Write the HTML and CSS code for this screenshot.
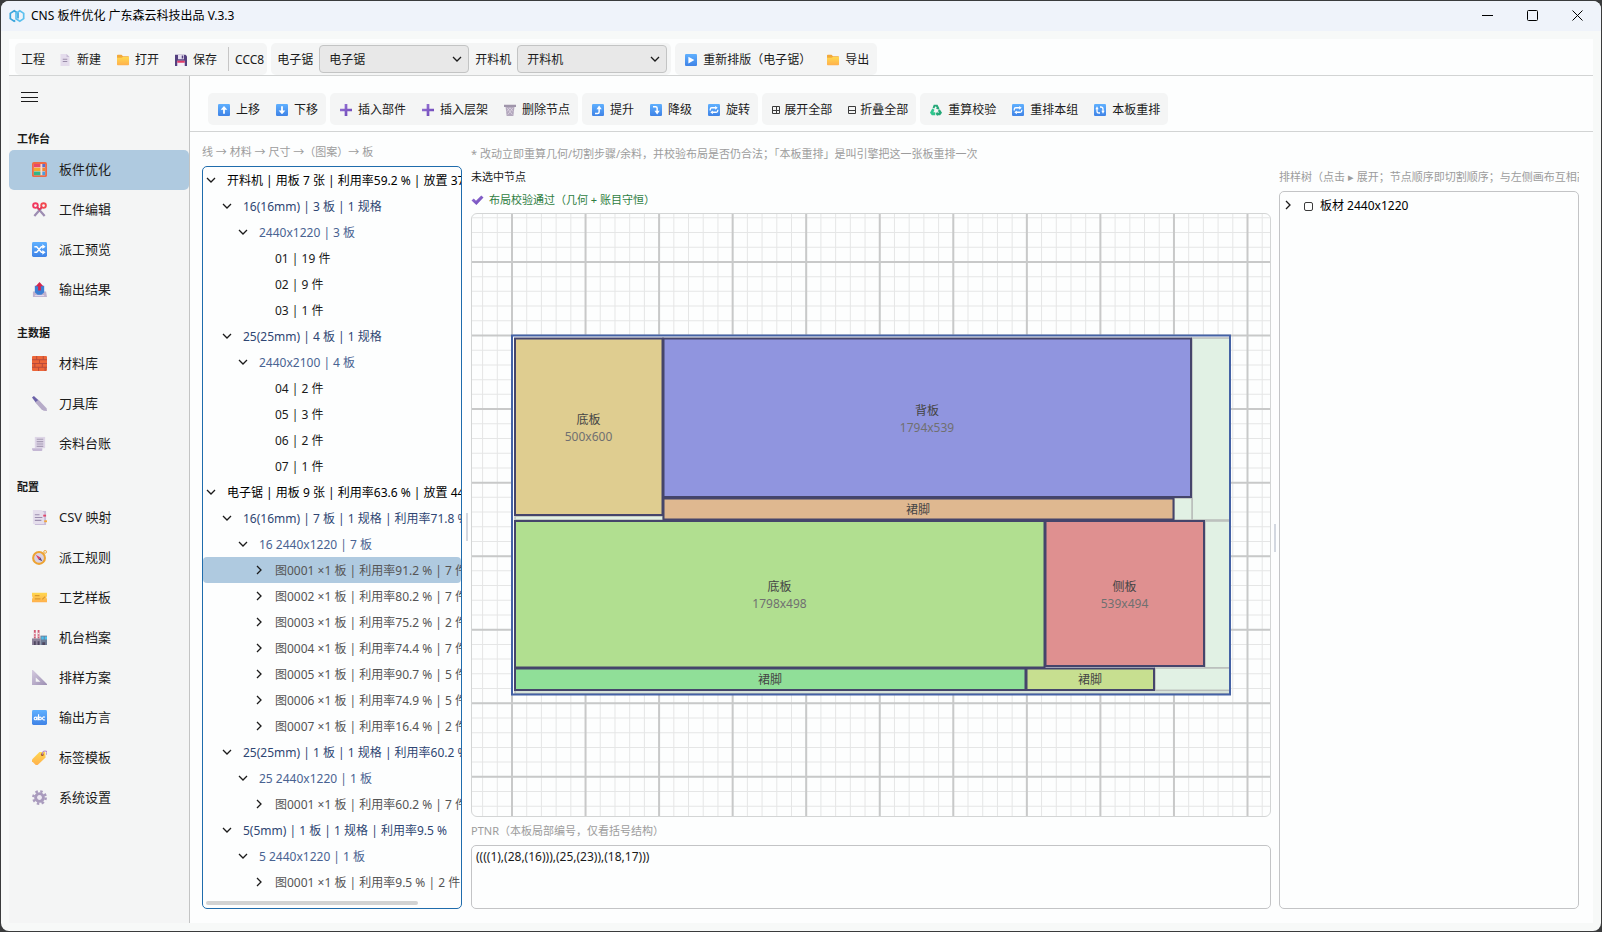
FILE: index.html
```html
<!DOCTYPE html>
<html lang="zh-CN">
<head>
<meta charset="utf-8">
<title>CNS 板件优化</title>
<link rel="stylesheet" href="styles.css">
</head>
<body>
<svg class="sprite" aria-hidden="true">
  <defs>
    <linearGradient id="blue" x1="0" y1="0" x2="0" y2="1"><stop offset="0" stop-color="#5fb0ff"/><stop offset="1" stop-color="#3f83e6"/></linearGradient>
    <linearGradient id="gold" x1="0" y1="0" x2="0" y2="1"><stop offset="0" stop-color="#ffd84f"/><stop offset="1" stop-color="#ffb04d"/></linearGradient>
    <linearGradient id="violet" x1="0" y1="0" x2="1" y2="1"><stop offset="0" stop-color="#9a78d8"/><stop offset="1" stop-color="#6a43b5"/></linearGradient>
    <linearGradient id="steel" x1="0" y1="0" x2="1" y2="1"><stop offset="0" stop-color="#d5cbe0"/><stop offset="1" stop-color="#9c8fb3"/></linearGradient>
  </defs>
  <symbol id="i-logo" viewBox="0 0 16 14"><g fill="none" stroke-width="1.7"><path stroke="#3aa5dc" d="M6.200 11.600L5.200 12.200L1.300 9.600V4.400L5.200 1.800L9 4.300V9.500"/><path stroke="#5cc0ee" d="M7 4.500L10.800 1.800L14.700 4.400V9.600L10.800 12.200L7 9.700z"/></g></symbol>
  <symbol id="i-new" viewBox="0 0 16 16"><path fill="#e4dcec" d="M2 0h8l4 4v12H2z"/><path fill="#c7bbd4" d="M10 0l4 4h-4z"/><path stroke="#9a8ca9" stroke-width="1.600" d="M5 7h6M5 10h6"/></symbol>
  <symbol id="i-folder" viewBox="0 0 16 16"><path fill="#f2a93a" d="M0 2q0-1 1-1h5l2 2h7q1 0 1 1v4H0z"/><path fill="url(#gold)" d="M0 5h6l2-1h8v10q0 1-1 1H1q-1 0-1-1z"/></symbol>
  <symbol id="i-save" viewBox="0 0 16 16"><path fill="#54407f" d="M0 1h14l2 2v13H0z"/><path fill="#e6deef" d="M4 1h8v6H4z"/><path fill="#54407f" d="M9 2h2v4H9z"/><path fill="#f4eef8" d="M3 9h10v7H3z"/><path fill="#df3b68" d="M3 9h10v2.500H3z"/></symbol>
  <symbol id="i-play" viewBox="0 0 16 16"><rect width="16" height="16" rx="1.500" fill="url(#blue)"/><path fill="#fff" d="M4.500 3.500l8 4.500-8 4.500z"/></symbol>
  <symbol id="i-up" viewBox="0 0 16 16"><rect width="16" height="16" rx="1.500" fill="url(#blue)"/><path fill="#fff" d="M8 2.500L12.500 7.500H9.200V13H6.800V7.500H3.500z"/></symbol>
  <symbol id="i-down" viewBox="0 0 16 16"><rect width="16" height="16" rx="1.500" fill="url(#blue)"/><path fill="#fff" d="M8 13.500L3.500 8.500H6.800V3H9.200V8.500H12.500z"/></symbol>
  <symbol id="i-plus" viewBox="0 0 16 16"><path fill="url(#violet)" d="M6.200 0h3.600v6.200H16v3.600H9.800V16H6.200V9.800H0V6.200h6.200z"/></symbol>
  <symbol id="i-trash" viewBox="0 0 16 16"><path fill="#b3a8bd" d="M2 3h12l-1.500 13h-9z"/><path fill="#9f95aa" d="M0 1h16v3H0z"/><path stroke="#e0d8e6" stroke-width="1" fill="none" d="M4 5l7 9M8 5l4 5M12 5l-7 9M8 5l-4 5"/></symbol>
  <symbol id="i-raise" viewBox="0 0 16 16"><rect width="16" height="16" rx="1.500" fill="url(#blue)"/><path fill="none" stroke="#fff" stroke-width="2" d="M4 12.500h3.500q2 0 2-2V6"/><path fill="#fff" d="M9.500 2L13 7H6z"/></symbol>
  <symbol id="i-lower" viewBox="0 0 16 16"><rect width="16" height="16" rx="1.500" fill="url(#blue)"/><path fill="none" stroke="#fff" stroke-width="2" d="M4 3.500h3.500q2 0 2 2V10"/><path fill="#fff" d="M9.500 14L13 9H6z"/></symbol>
  <symbol id="i-rotate" viewBox="0 0 16 16"><rect width="16" height="16" rx="1.500" fill="url(#blue)"/><path fill="none" stroke="#fff" stroke-width="1.700" d="M3 8.500V7q0-2 2-2h5M13 7.500V9q0 2-2 2H6"/><path fill="#fff" d="M9.500 2.500l3.500 2.500-3.500 2.500zM6.500 8.500L3 11l3.500 2.500z"/></symbol>
  <symbol id="i-cycle" viewBox="0 0 16 16"><rect width="16" height="16" rx="1.500" fill="url(#blue)"/><path fill="none" stroke="#fff" stroke-width="1.700" d="M4 6v3.500q0 2.500 3 2.500h1M12 10V6.500Q12 4 9 4H8"/><path fill="#fff" d="M1.800 7H6.200L4 3zM9.800 9h4.400L12 13z"/></symbol>
  <symbol id="i-expand" viewBox="0 0 8 8"><path fill="none" stroke="#3b3b3b" d="M.5.5h7v7h-7zM1 4.500h6M4.500 1v6"/></symbol>
  <symbol id="i-collapse" viewBox="0 0 8 8"><path fill="none" stroke="#3b3b3b" d="M.5.5h7v7h-7zM1 4.500h6"/></symbol>
  <symbol id="i-recycle" viewBox="0 0 16 16"><g fill="#25a878"><path d="M5 1h5l2.500 4.500-1 2L8 6l1-1.500L7.500 3 5.500 6 3.500 5z"/><path fill="#2fc58d" d="M3 6l3 1.500L4.500 11H7v4H2.500L0 11.500z"/><path d="M13 7l3 4.500L13.500 15H10v1.500L7.500 13 10 10v1.500h2L10.500 9z"/></g></symbol>
  <symbol id="i-check" viewBox="0 0 16 16"><path fill="url(#violet)" d="M0 8.500L3 6l3 3L13 2l3 2.500L6.500 14.500z"/></symbol>
  <symbol id="i-abacus" viewBox="0 0 16 16"><rect width="16" height="16" rx="2" fill="#ef6a45"/><path fill="#f7d9cf" d="M2 2h12v12H2z"/><path fill="#e8486b" d="M2 2h7v3.500H2z"/><path fill="#5a6fd0" d="M11 2h3v3.500h-3z"/><path fill="#f3aa2c" d="M2 6h7v3.500H2z"/><path fill="#e98a35" d="M11 6h3v3.500h-3z"/><path fill="#35b485" d="M2 10h7v4H2z"/><path fill="#4a9ee0" d="M11 10h3v4h-3z"/></symbol>
  <symbol id="i-scissors" viewBox="0 0 16 16"><path stroke="#9d8db2" stroke-width="2.400" d="M6 6.500l7.500 8.500M10 6.500L2.500 15"/><circle cx="3.700" cy="3.800" r="2.500" fill="none" stroke="#f2385f" stroke-width="2"/><circle cx="12.300" cy="3.800" r="2.500" fill="none" stroke="#f2484f" stroke-width="2"/><path stroke="#e5365c" stroke-width="1.800" fill="none" d="M5.500 5.500L8 8l2.500-2.500"/></symbol>
  <symbol id="i-shuffle" viewBox="0 0 16 16"><rect width="16" height="16" rx="1.500" fill="url(#blue)"/><path fill="none" stroke="#fff" stroke-width="1.500" d="M2.500 5H5l5 6h2M2.500 11H5l5-6h2"/><path fill="#fff" d="M11 2.500L14.500 5 11 7.500zM11 8.500l3.500 2.500-3.500 2.500z"/></symbol>
  <symbol id="i-outbox" viewBox="0 0 16 16"><path fill="#bfb2cf" d="M1 10h14l1 6H1z"/><path fill="#3c7fd4" d="M3 4h10v7l-3 2.500H6L3 11z"/><path fill="#d4264e" d="M8 0l4 4.500H9.500V9h-3V4.500H4z"/><path stroke="#e7deef" d="M3 14.500h10"/></symbol>
  <symbol id="i-brick" viewBox="0 0 16 16"><rect width="16" height="16" rx="1" fill="#ec6639"/><path stroke="#b54a3c" fill="none" d="M0 4h16M0 8h16M0 12h16M5 0v4M12 0v4M8 4v4M3 8v4M11 8v4M7 12v4M14 12v4"/></symbol>
  <symbol id="i-knife" viewBox="0 0 16 16"><path fill="#6b62a8" d="M0 1.500L2 0l5 4.500L4 7z"/><path fill="#b6abc8" d="M3.500 7L7 4l8.500 9 .5 3q-4 0-6-2z"/></symbol>
  <symbol id="i-scroll" viewBox="0 0 16 16"><path fill="#ddd5e6" d="M3 1h11v12H3z"/><path fill="#c4b7d4" d="M0 13h11v2q0 1-1 1H2q-2 0-2-3z"/><path stroke="#a79cb5" stroke-width="1.200" d="M5 3.500h7M5 6h7M5 8.500h7M5 11h7"/></symbol>
  <symbol id="i-doc" viewBox="0 0 16 16"><path fill="#c9bcd9" d="M3 1h12v15H3z"/><path fill="#e5deec" d="M1 0h9l3 3v12H1z"/><path stroke="#9c8eae" stroke-width="1.200" d="M3 5h5M3 8h8M3 11h7"/><path fill="#e0476b" d="M12 5h3v2h-3z"/><path fill="#f2a73c" d="M13 11h3v2h-3z"/></symbol>
  <symbol id="i-compass" viewBox="0 0 16 16"><circle cx="14" cy="2" r="1.500" fill="none" stroke="#eda332"/><circle cx="7.500" cy="8.500" r="6.300" fill="#d9d1e2" stroke="#eda332" stroke-width="2.200"/><path fill="#dd3f60" d="M4 5l5 3-2 2z"/><path fill="#54457c" d="M11 12L7 10l2-2z"/></symbol>
  <symbol id="i-ticket" viewBox="0 0 16 16"><path fill="url(#gold)" d="M0 3h16v3.500q-1.500 1.500 0 3V13H0V9.500q1.500-1.500 0-3z"/><path stroke="#d99a2e" stroke-width="1.200" d="M3 6h5M3 9.500h6M11 10l3-3"/></symbol>
  <symbol id="i-factory" viewBox="0 0 16 16"><path fill="#cf5a73" d="M2 0h2v9H2zM6 0h2v9H6z"/><path fill="#f5e3e8" d="M2 3h2v1.500H2zM6 3h2v1.500H6zM2 6h2v1H2zM6 6h2v1H6z"/><path fill="#8c8299" d="M0 9h9v7H0z"/><path fill="#6d7c96" d="M9 6h7v10H9z"/><path fill="#4cc0ee" d="M10 7h2.500v3H10zM13.500 7H16v3h-2.500z"/><path fill="#4f4760" d="M2 12h2v4H2zM6 12h2v4H6zM11 13h3v3h-3z"/></symbol>
  <symbol id="i-ruler" viewBox="0 0 16 16"><path fill="url(#steel)" fill-rule="evenodd" d="M0 0h1l15 15v1H0zM4 8v4.500h5z"/></symbol>
  <symbol id="i-abc" viewBox="0 0 16 16"><rect width="16" height="16" rx="1.500" fill="url(#blue)"/><g fill="none" stroke="#fff" stroke-width="1.200"><circle cx="3.700" cy="9" r="1.400"/><path d="M5.500 7v4M7 4.500V11M13.800 7.800a1.600 1.600 0 1 0 0 2.400"/><circle cx="8.600" cy="9" r="1.400"/></g></symbol>
  <symbol id="i-tag" viewBox="0 0 16 16"><path fill="url(#gold)" d="M8 2l6 0 .5 6L6 16q-1 .5-2 0L0 12q-.500-1 0-2z"/><circle cx="11" cy="5" r="1.500" fill="#a2582c"/><path fill="none" stroke="#b58ac4" stroke-width="1.200" d="M11 5q0-4 3-4t1.500 4"/></symbol>
  <symbol id="i-gear" viewBox="0 0 16 16"><circle cx="8" cy="8" r="6.600" fill="none" stroke="#a99bbd" stroke-width="2.600" stroke-dasharray="2.600 2.584"/><circle cx="8" cy="8" r="4" fill="none" stroke="#a99bbd" stroke-width="3.400"/><circle cx="8" cy="8" r="2.400" fill="#eee9f3"/></symbol>
  <symbol id="i-chev-d" viewBox="0 0 10 10"><path fill="none" stroke="#1b1b1b" stroke-width="1.300" d="M1 3l4 4 4-4"/></symbol>
  <symbol id="i-chev-r" viewBox="0 0 10 10"><path fill="none" stroke="#1b1b1b" stroke-width="1.300" d="M3 1l4 4-4 4"/></symbol>
</svg>

<div class="window">
  <header class="titlebar">
    <svg class="logo"><use href="#i-logo"/></svg>
    <h1 class="app-title">CNS 板件优化 广东森云科技出品 V.3.3</h1>
    <button class="win-btn" aria-label="最小化"><svg viewBox="0 0 11 11"><path d="M0 5.500h11"/></svg></button>
    <button class="win-btn" aria-label="最大化"><svg viewBox="0 0 11 11"><rect x=".5" y=".5" width="10" height="10" rx="1"/></svg></button>
    <button class="win-btn" aria-label="关闭"><svg viewBox="0 0 11 11"><path d="M.5.5l10 10M10.500.5l-10 10"/></svg></button>
  </header>

  <div class="shell">
    <div class="toolbar toolbar-top">
      <div class="group">
        <span class="group-label">工程</span>
        <button class="tool"><svg class="icon"><use href="#i-new"/></svg>新建</button>
        <button class="tool"><svg class="icon"><use href="#i-folder"/></svg>打开</button>
        <button class="tool"><svg class="icon"><use href="#i-save"/></svg>保存</button>
        <span class="separator"></span>
        <span class="project">CCC8</span>
      </div>
      <div class="group group-fields">
        <label for="saw">电子锯</label>
        <span class="select-box"><select id="saw"><option>电子锯</option></select><svg class="chev"><use href="#i-chev-d"/></svg></span>
        <label for="cutter">开料机</label>
        <span class="select-box"><select id="cutter"><option>开料机</option></select><svg class="chev"><use href="#i-chev-d"/></svg></span>
      </div>
      <div class="group">
        <button class="tool"><svg class="icon"><use href="#i-play"/></svg>重新排版（电子锯）</button>
        <button class="tool"><svg class="icon"><use href="#i-folder"/></svg>导出</button>
      </div>
    </div>

    <div class="body">
      <nav class="sidebar">
        <button class="menu-btn" aria-label="菜单"><svg viewBox="0 0 17 11"><path d="M0 .5h17M0 5.500h17M0 9.500h17"/></svg></button>
        <h2>工作台</h2>
        <a href="#" class="active"><svg class="icon"><use href="#i-abacus"/></svg>板件优化</a>
        <a href="#"><svg class="icon"><use href="#i-scissors"/></svg>工件编辑</a>
        <a href="#"><svg class="icon"><use href="#i-shuffle"/></svg>派工预览</a>
        <a href="#"><svg class="icon"><use href="#i-outbox"/></svg>输出结果</a>
        <h2>主数据</h2>
        <a href="#"><svg class="icon"><use href="#i-brick"/></svg>材料库</a>
        <a href="#"><svg class="icon"><use href="#i-knife"/></svg>刀具库</a>
        <a href="#"><svg class="icon"><use href="#i-scroll"/></svg>余料台账</a>
        <h2>配置</h2>
        <a href="#"><svg class="icon"><use href="#i-doc"/></svg>CSV 映射</a>
        <a href="#"><svg class="icon"><use href="#i-compass"/></svg>派工规则</a>
        <a href="#"><svg class="icon"><use href="#i-ticket"/></svg>工艺样板</a>
        <a href="#"><svg class="icon"><use href="#i-factory"/></svg>机台档案</a>
        <a href="#"><svg class="icon"><use href="#i-ruler"/></svg>排样方案</a>
        <a href="#"><svg class="icon"><use href="#i-abc"/></svg>输出方言</a>
        <a href="#"><svg class="icon"><use href="#i-tag"/></svg>标签模板</a>
        <a href="#"><svg class="icon"><use href="#i-gear"/></svg>系统设置</a>
      </nav>

      <main class="main">
        <div class="toolbar toolbar-edit">
          <div class="group">
            <button class="tool"><svg class="icon"><use href="#i-up"/></svg>上移</button>
            <button class="tool"><svg class="icon"><use href="#i-down"/></svg>下移</button>
          </div>
          <div class="group">
            <button class="tool"><svg class="icon"><use href="#i-plus"/></svg>插入部件</button>
            <button class="tool"><svg class="icon"><use href="#i-plus"/></svg>插入层架</button>
            <button class="tool"><svg class="icon"><use href="#i-trash"/></svg>删除节点</button>
          </div>
          <div class="group">
            <button class="tool"><svg class="icon"><use href="#i-raise"/></svg>提升</button>
            <button class="tool"><svg class="icon"><use href="#i-lower"/></svg>降级</button>
            <button class="tool"><svg class="icon"><use href="#i-rotate"/></svg>旋转</button>
          </div>
          <div class="group">
            <button class="tool tool-glyph"><svg class="icon"><use href="#i-expand"/></svg>展开全部</button>
            <button class="tool tool-glyph"><svg class="icon"><use href="#i-collapse"/></svg>折叠全部</button>
          </div>
          <div class="group">
            <button class="tool"><svg class="icon"><use href="#i-recycle"/></svg>重算校验</button>
            <button class="tool"><svg class="icon"><use href="#i-rotate"/></svg>重排本组</button>
            <button class="tool"><svg class="icon"><use href="#i-cycle"/></svg>本板重排</button>
          </div>
        </div>

        <div class="workspace">
          <section class="plan">
            <p class="plan-path">线 → 材料 → 尺寸 →（图案）→ 板</p>
            <div class="tree tree-plan">
              <ul>
                <li><button class="row l0"><svg class="chev"><use href="#i-chev-d"/></svg>开料机 | 用板 7 张 | 利用率59.2 % | 放置 37 件</button></li>
                <li><button class="row l1"><svg class="chev"><use href="#i-chev-d"/></svg>16(16mm) | 3 板 | 1 规格</button></li>
                <li><button class="row l2"><svg class="chev"><use href="#i-chev-d"/></svg>2440x1220 | 3 板</button></li>
                <li><button class="row leaf">01 | 19 件</button></li>
                <li><button class="row leaf">02 | 9 件</button></li>
                <li><button class="row leaf">03 | 1 件</button></li>
                <li><button class="row l1"><svg class="chev"><use href="#i-chev-d"/></svg>25(25mm) | 4 板 | 1 规格</button></li>
                <li><button class="row l2"><svg class="chev"><use href="#i-chev-d"/></svg>2440x2100 | 4 板</button></li>
                <li><button class="row leaf">04 | 2 件</button></li>
                <li><button class="row leaf">05 | 3 件</button></li>
                <li><button class="row leaf">06 | 2 件</button></li>
                <li><button class="row leaf">07 | 1 件</button></li>
                <li><button class="row l0"><svg class="chev"><use href="#i-chev-d"/></svg>电子锯 | 用板 9 张 | 利用率63.6 % | 放置 44 件</button></li>
                <li><button class="row l1"><svg class="chev"><use href="#i-chev-d"/></svg>16(16mm) | 7 板 | 1 规格 | 利用率71.8 %</button></li>
                <li><button class="row l2"><svg class="chev"><use href="#i-chev-d"/></svg>16 2440x1220 | 7 板</button></li>
                <li><button class="row l3 selected"><svg class="chev"><use href="#i-chev-r"/></svg>图0001 ×1 板 | 利用率91.2 % | 7 件</button></li>
                <li><button class="row l3"><svg class="chev"><use href="#i-chev-r"/></svg>图0002 ×1 板 | 利用率80.2 % | 7 件</button></li>
                <li><button class="row l3"><svg class="chev"><use href="#i-chev-r"/></svg>图0003 ×1 板 | 利用率75.2 % | 2 件</button></li>
                <li><button class="row l3"><svg class="chev"><use href="#i-chev-r"/></svg>图0004 ×1 板 | 利用率74.4 % | 7 件</button></li>
                <li><button class="row l3"><svg class="chev"><use href="#i-chev-r"/></svg>图0005 ×1 板 | 利用率90.7 % | 5 件</button></li>
                <li><button class="row l3"><svg class="chev"><use href="#i-chev-r"/></svg>图0006 ×1 板 | 利用率74.9 % | 5 件</button></li>
                <li><button class="row l3"><svg class="chev"><use href="#i-chev-r"/></svg>图0007 ×1 板 | 利用率16.4 % | 2 件</button></li>
                <li><button class="row l1"><svg class="chev"><use href="#i-chev-d"/></svg>25(25mm) | 1 板 | 1 规格 | 利用率60.2 %</button></li>
                <li><button class="row l2"><svg class="chev"><use href="#i-chev-d"/></svg>25 2440x1220 | 1 板</button></li>
                <li><button class="row l3"><svg class="chev"><use href="#i-chev-r"/></svg>图0001 ×1 板 | 利用率60.2 % | 7 件</button></li>
                <li><button class="row l1"><svg class="chev"><use href="#i-chev-d"/></svg>5(5mm) | 1 板 | 1 规格 | 利用率9.5 %</button></li>
                <li><button class="row l2"><svg class="chev"><use href="#i-chev-d"/></svg>5 2440x1220 | 1 板</button></li>
                <li><button class="row l3"><svg class="chev"><use href="#i-chev-r"/></svg>图0001 ×1 板 | 利用率9.5 % | 2 件</button></li>
              </ul>
              <div class="scrollbar"><div class="thumb"></div></div>
            </div>
          </section>
          <div class="splitter"></div>

          <section class="editor">
            <p class="hint">* 改动立即重算几何/切割步骤/余料，并校验布局是否仍合法；「本板重排」是叫引擎把这一张板重排一次</p>
            <div class="panes">
              <div class="layout">
                <p class="status">未选中节点</p>
                <p class="status ok"><svg class="icon"><use href="#i-check"/></svg>布局校验通过（几何 + 账目守恒）</p>
                <div class="canvas">
                  <svg viewBox="472 214 798 602" preserveAspectRatio="xMidYMid slice" role="img" aria-label="排样图">
                    <path class="minor" stroke-width="602" stroke-dasharray="1 13.71" d="M482.080 515H1270"/>
                    <path class="minor" stroke-width="798" stroke-dasharray="1 13.71" d="M871 217.320V816"/>
                    <path class="major" stroke-width="602" stroke-dasharray="2 71.55" d="M511 515H1270"/>
                    <path class="major" stroke-width="798" stroke-dasharray="2 71.55" d="M871 261V816"/>
                    <rect x="512" y="335.500" width="718" height="359" fill="#fdfefe"/>
                    <g class="waste">
                      <rect x="1192" y="338" width="38" height="182"/>
                      <rect x="1174" y="498" width="18" height="22"/>
                      <rect x="515" y="516" width="148" height="4"/>
                      <rect x="1205" y="521" width="25" height="147"/>
                      <rect x="1155" y="668" width="75" height="22.500"/>
                      <rect x="515" y="690.500" width="715" height="3"/>
                    </g>
                    <rect class="board" x="512" y="335.500" width="718" height="359"/>
                    <g class="part">
                      <rect fill="#dfcd90" x="515" y="338.500" width="147.500" height="176.500"/>
                      <rect fill="#9095df" x="663.500" y="338.500" width="527.500" height="158.500"/>
                      <rect fill="#dfb890" x="663.500" y="498.500" width="510" height="21"/>
                      <rect fill="#b1df90" x="515" y="521" width="529.500" height="146.500"/>
                      <rect fill="#df9090" x="1045.500" y="521" width="158.500" height="145"/>
                      <rect fill="#90df98" x="515" y="668.500" width="510.500" height="21.500"/>
                      <rect fill="#c7df90" x="1026.500" y="668.500" width="127.500" height="21.500"/>
                    </g>
                    <g class="name">
                      <text x="588.500" y="424">底板</text><text x="927" y="415">背板</text><text x="918" y="514">裙脚</text>
                      <text x="779.500" y="591">底板</text><text x="1124.500" y="591">侧板</text><text x="770" y="684">裙脚</text><text x="1090" y="684">裙脚</text>
                    </g>
                    <g class="size">
                      <text x="588.500" y="441">500x600</text><text x="927" y="432">1794x539</text>
                      <text x="779.500" y="608">1798x498</text><text x="1124.500" y="608">539x494</text>
                    </g>
                  </svg>
                </div>
                <label class="ptnr-label" for="ptnr">PTNR（本板局部编号，仅看括号结构）</label>
                <textarea id="ptnr" spellcheck="false">((((1),(28,(16))),(25,(23)),(18,17)))</textarea>
              </div>
              <div class="splitter"></div>
              <div class="nest">
                <p class="nest-title">排样树（点击 ▸ 展开；节点顺序即切割顺序；与左侧画布互相高亮）</p>
                <div class="tree tree-nest">
                  <ul>
                    <li><button class="row l0"><svg class="chev"><use href="#i-chev-r"/></svg><span class="sheet-mark"></span>板材 2440x1220</button></li>
                  </ul>
                </div>
              </div>
            </div>
          </section>
        </div>
      </main>
    </div>
  </div>
</div>
</body>
</html>
```
FILE: styles.css
```css
* { box-sizing: border-box; }
html, body { height: 100%; margin: 0; }
body {
  padding: 1px;
  background: #3a3b3c;
  color: #1b1b1b;
  font: 12px/16px "Noto Sans", "Noto Sans CJK SC", sans-serif;
}
h1, h2, p, ul { margin: 0; padding: 0; font: inherit; }
ul { list-style: none; }
button, select, textarea { font: inherit; color: inherit; }
button { margin: 0; padding: 0; border: 0; background: none; text-align: left; white-space: nowrap; }
svg { display: block; flex: none; }
.sprite { position: absolute; width: 0; height: 0; }

.window {
  display: flex;
  flex-direction: column;
  height: 100%;
  overflow: hidden;
  border-radius: 8px;
  background: #f7f9f8;
}
.titlebar { display: flex; align-items: center; height: 30px; padding: 0 1px 0 8px; background: #eff3fa; }
.logo { width: 16px; height: 14px; }
.app-title { flex: 1; padding-left: 6px; color: #000; }
.win-btn { display: grid; place-items: center; width: 45px; height: 30px; padding-bottom: 2px; }
.win-btn svg { width: 11px; height: 11px; fill: none; stroke: #000; }

.shell { flex: 1; min-height: 0; display: flex; flex-direction: column; margin: 8px; background: #fdfefe; }
.toolbar { display: flex; flex: none; gap: 4px; border-bottom: 1px solid #d2d4d4; }
.toolbar-top { padding: 4px 6px 0; }
.toolbar-edit { padding: 17px 18px 6px; }
.group { display: flex; align-items: center; height: 32px; padding-left: 2px; border-radius: 5px; background: #f4f5f5; }
.group-label { padding: 2px 6px 0 4px; }
.tool { display: flex; align-items: center; gap: 6px; height: 28px; padding: 2px 8px 0; }
.tool .icon { width: 12px; height: 12px; }
.tool-glyph { gap: 4px; }
.tool-glyph .icon { width: 8px; height: 8px; }
.separator { width: 1px; height: 24px; margin: 0 6px 0 3px; background: #c6c6c6; }
.project { padding: 2px 3px 0 0; }
.group-fields { gap: 6px; padding: 0 4px 0 6px; }
.group-fields label { padding-top: 2px; }
.select-box { position: relative; display: flex; }
.select-box select {
  appearance: none;
  width: 150px;
  height: 28px;
  padding: 1px 24px 0 9px;
  border: 1px solid #c3c4c4;
  border-radius: 4px;
  background: #e8e8e8;
}
.select-box .chev { position: absolute; right: 7px; top: 9px; pointer-events: none; }
.chev { width: 10px; height: 10px; }

.body { flex: 1; min-height: 0; display: flex; }
.sidebar { flex: none; width: 181px; overflow: hidden; border-right: 1px solid #c3c4c4; background: #f4f5f5; }
.menu-btn { display: grid; place-items: center; width: 40px; height: 40px; padding-top: 3px; }
.menu-btn svg { width: 17px; height: 11px; fill: none; stroke: #1b1b1b; }
.sidebar h2 { padding: 15px 8px 3px; font-size: 11px; line-height: 16px; font-weight: 700; }
.sidebar a {
  display: flex;
  align-items: center;
  gap: 12px;
  height: 40px;
  padding: 0 0 2px 23px;
  border-radius: 5px;
  color: inherit;
  font-size: 13px;
  text-decoration: none;
}
.sidebar a.active { background: #afcae0; }
.sidebar .icon { width: 15px; height: 15px; }

.main { flex: 1; min-width: 0; display: flex; flex-direction: column; }
.workspace { flex: 1; min-height: 0; display: flex; padding: 12px 14px 14px 12px; }
.plan { flex: none; width: 260px; display: flex; flex-direction: column; }
.plan-path, .hint, .nest-title, .ptnr-label { color: #9c9c9c; font-size: 11px; white-space: nowrap; }
.plan-path { line-height: 16px; margin-bottom: 6px; }
.tree { flex: 1; min-height: 0; overflow: hidden; border: 1px solid #c3c4c6; border-radius: 5px; }
.tree-plan { display: flex; flex-direction: column; border-color: #1f6cac; }
.tree-plan ul { flex: 1; min-height: 0; overflow: hidden; }
.row {
  display: flex;
  align-items: center;
  width: 100%;
  height: 26px;
  padding: 2px 0 0 3px;
  overflow: hidden;
  border-radius: 4px;
  color: #1b1b1b;
}
.row .chev { margin: 0 11px 2px 0; }
.row.l0 { color: #000; }
.row.l1 { padding-left: 19px; color: #2f4673; }
.row.l2 { padding-left: 35px; color: #496392; }
.row.l3 { padding-left: 51px; color: #555; }
.row.leaf { padding-left: 72px; }
.row.selected { background: #afcae0; }
.scrollbar { flex: none; padding: 0 3px 3px; }
.thumb { width: 84%; height: 4px; border-radius: 2px; background: #d2d3d3; }

.splitter { flex: none; width: 8px; display: flex; align-items: center; justify-content: center; }
.splitter::before { content: ""; width: 2px; height: 28px; background: #d3d8e0; }
.workspace > .splitter { width: 9px; }

.editor { flex: 1; min-width: 0; display: flex; flex-direction: column; }
.hint { line-height: 20px; }
.panes { flex: 1; min-height: 0; display: flex; padding-top: 3px; }
.layout { flex: 1; min-width: 0; display: flex; flex-direction: column; }
.status { display: flex; align-items: center; gap: 5px; margin-bottom: 3px; font-size: 11px; line-height: 20px; }
.status .icon { width: 13px; height: 12px; }
.status.ok { color: #2e7d41; }
.canvas { flex: 1; min-height: 0; overflow: hidden; border: 1px solid #d3d5d5; border-radius: 6px; }
.canvas svg { width: 100%; height: 100%; }
.ptnr-label { margin: 4px 0; line-height: 20px; }
textarea {
  display: block;
  height: 64px;
  padding: 3px 4px;
  resize: none;
  border: 1px solid #c3c4c6;
  border-radius: 5px;
  background: #fdfefe;
}
.nest { flex: none; width: 300px; display: flex; flex-direction: column; }
.nest-title { margin-bottom: 4px; line-height: 20px; overflow: hidden; }
.sheet-mark { width: 9px; height: 9px; margin-right: 7px; border: 1px solid #3b3b3b; border-radius: 2px; }

.minor { fill: none; stroke: #e5e6e6; }
.major { fill: none; stroke: #c8c9c9; }
.waste rect { fill: #e1f1e4; stroke: #b9bdba; stroke-width: 1.500; }
.board { fill: none; stroke: #4462a5; stroke-width: 2; }
.part rect { stroke: #45456b; stroke-width: 2; }
.name, .size { font-size: 12px; text-anchor: middle; }
.name { fill: #444; }
.size { fill: #707070; }
```
